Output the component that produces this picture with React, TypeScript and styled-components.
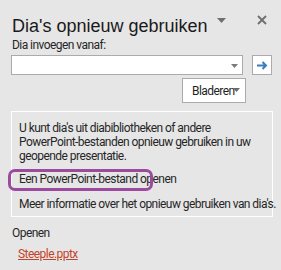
import React from "react";
import styled, { createGlobalStyle } from "styled-components";

const Global = createGlobalStyle`
  html, body { margin: 0; padding: 0; background: #e6e6e6; }
  body { font-family: Roboto, "Liberation Sans", Arial, sans-serif; color: #262626; }
`;

const bodyFont = `
  font-family: Roboto, "Liberation Sans", Arial, sans-serif;
  font-size: 12px;
  line-height: 14px;
  letter-spacing: -0.55px;
`;

const Panel = styled.div`
  width: 281px;
  height: 270px;
  box-sizing: border-box;
  padding: 15px 9px 0 11px;
  background: #e6e6e6;
  display: flex;
  flex-direction: column;
  overflow: hidden;
`;

const Header = styled.div`
  display: flex;
  align-items: flex-start;
  height: 22px;
`;

const Title = styled.h1`
  margin: 0 0 0 1px;
  font-family: "Liberation Sans", Arial, sans-serif;
  font-size: 18px;
  line-height: 22px;
  font-weight: 400;
  color: #1a1a1a;
  flex: 1;
  white-space: nowrap;
`;

const HeaderIcon = styled.button<{ $w: number; $h: number; $mt: number; $mr: number }>`
  border: 0;
  background: none;
  padding: 0;
  display: flex;
  width: ${(p) => p.$w}px;
  height: ${(p) => p.$h}px;
  margin-top: ${(p) => p.$mt}px;
  margin-right: ${(p) => p.$mr}px;
`;

const Label = styled.div`
  ${bodyFont}
  margin: 1px 0 0 1px;
`;

const Row = styled.div`
  display: flex;
  margin-top: 3px;
  gap: 9px;
`;

const Combo = styled.div`
  width: 233px;
  height: 20px;
  box-sizing: border-box;
  border: 1px solid #ababab;
  background: #fff;
  display: flex;
  align-items: center;
  justify-content: flex-end;
  padding: 1px 4px 0 0;
`;

const GoButton = styled.button`
  width: 20px;
  height: 20px;
  box-sizing: border-box;
  border: 1px solid #ababab;
  background: #fff;
  padding: 0;
  display: flex;
  align-items: center;
  justify-content: center;
`;

const BrowseRow = styled.div`
  display: flex;
  justify-content: flex-end;
  padding-right: 26px;
  margin-top: 3px;
`;

const BrowseButton = styled.button`
  width: 64px;
  height: 25px;
  box-sizing: border-box;
  border: 1px solid #ababab;
  background: #fff;
  padding: 0 0 0 9px;
  display: flex;
  align-items: center;
  ${bodyFont}
  color: #1f1f1f;
  position: relative;
`;

const BrowseCaret = styled.span`
  position: absolute;
  right: 5px;
  top: 9px;
  display: flex;
`;

const InfoBox = styled.div`
  margin-top: 8px;
  width: 262px;
  box-sizing: border-box;
  border: 1px solid #ffffff;
  padding: 9px 6px 5px 7px;
  ${bodyFont}
`;

const InfoText = styled.p`
  margin: 0;
`;

const Action = styled.div<{ $mt: number }>`
  margin-top: ${(p) => p.$mt}px;
  white-space: nowrap;
  position: relative;
`;

const Highlight = styled.span`
  position: absolute;
  left: -11px;
  top: -3px;
  width: 145px;
  height: 22px;
  box-sizing: border-box;
  border: 3px solid #9c4a9e;
  border-radius: 7px;
  pointer-events: none;
`;

const SectionLabel = styled.div`
  ${bodyFont}
  margin: 9px 0 0 1px;
`;

const RecentLink = styled.a`
  ${bodyFont}
  margin: 7px 0 0 7px;
  color: #c4432a;
  text-decoration: underline;
  align-self: flex-start;
`;

const Triangle = ({ w, h, color }: { w: number; h: number; color: string }) => (
  <svg width={w} height={h} viewBox={`0 0 ${w} ${h}`}>
    <polygon points={`0,0 ${w},0 ${w / 2},${h}`} fill={color} />
  </svg>
);

export default function App() {
  return (
    <>
      <Global />
      <Panel>
        <Header>
          <Title>Dia's opnieuw gebruiken</Title>
          <HeaderIcon $w={9} $h={5} $mt={3} $mr={31}>
            <Triangle w={9} h={5} color="#707070" />
          </HeaderIcon>
          <HeaderIcon $w={10} $h={10} $mt={0} $mr={5}>
            <svg width="10" height="10" viewBox="0 0 10 10">
              <path d="M1 1 L9 9 M9 1 L1 9" stroke="#6e6e6e" strokeWidth="1.8" />
            </svg>
          </HeaderIcon>
        </Header>
        <Label>Dia invoegen vanaf:</Label>
        <Row>
          <Combo>
            <Triangle w={7} h={4} color="#7a7a7a" />
          </Combo>
          <GoButton>
            <svg width="11" height="9" viewBox="0 0 11 9">
              <path d="M0 4.5 H9 M5.5 1 L9 4.5 L5.5 8" stroke="#3b7cc0" strokeWidth="2" fill="none" />
            </svg>
          </GoButton>
        </Row>
        <BrowseRow>
          <BrowseButton>
            Bladeren
            <BrowseCaret>
              <Triangle w={7} h={4} color="#6a6a6a" />
            </BrowseCaret>
          </BrowseButton>
        </BrowseRow>
        <InfoBox>
          <InfoText>
            U kunt dia's uit diabibliotheken of andere PowerPoint-bestanden opnieuw gebruiken in uw geopende presentatie.
          </InfoText>
          <Action $mt={9}>
            <Highlight />
            Een PowerPoint-bestand openen
          </Action>
          <Action $mt={11}>Meer informatie over het opnieuw gebruiken van dia's.</Action>
        </InfoBox>
        <SectionLabel>Openen</SectionLabel>
        <RecentLink href="#">Steeple.pptx</RecentLink>
      </Panel>
    </>
  );
}
